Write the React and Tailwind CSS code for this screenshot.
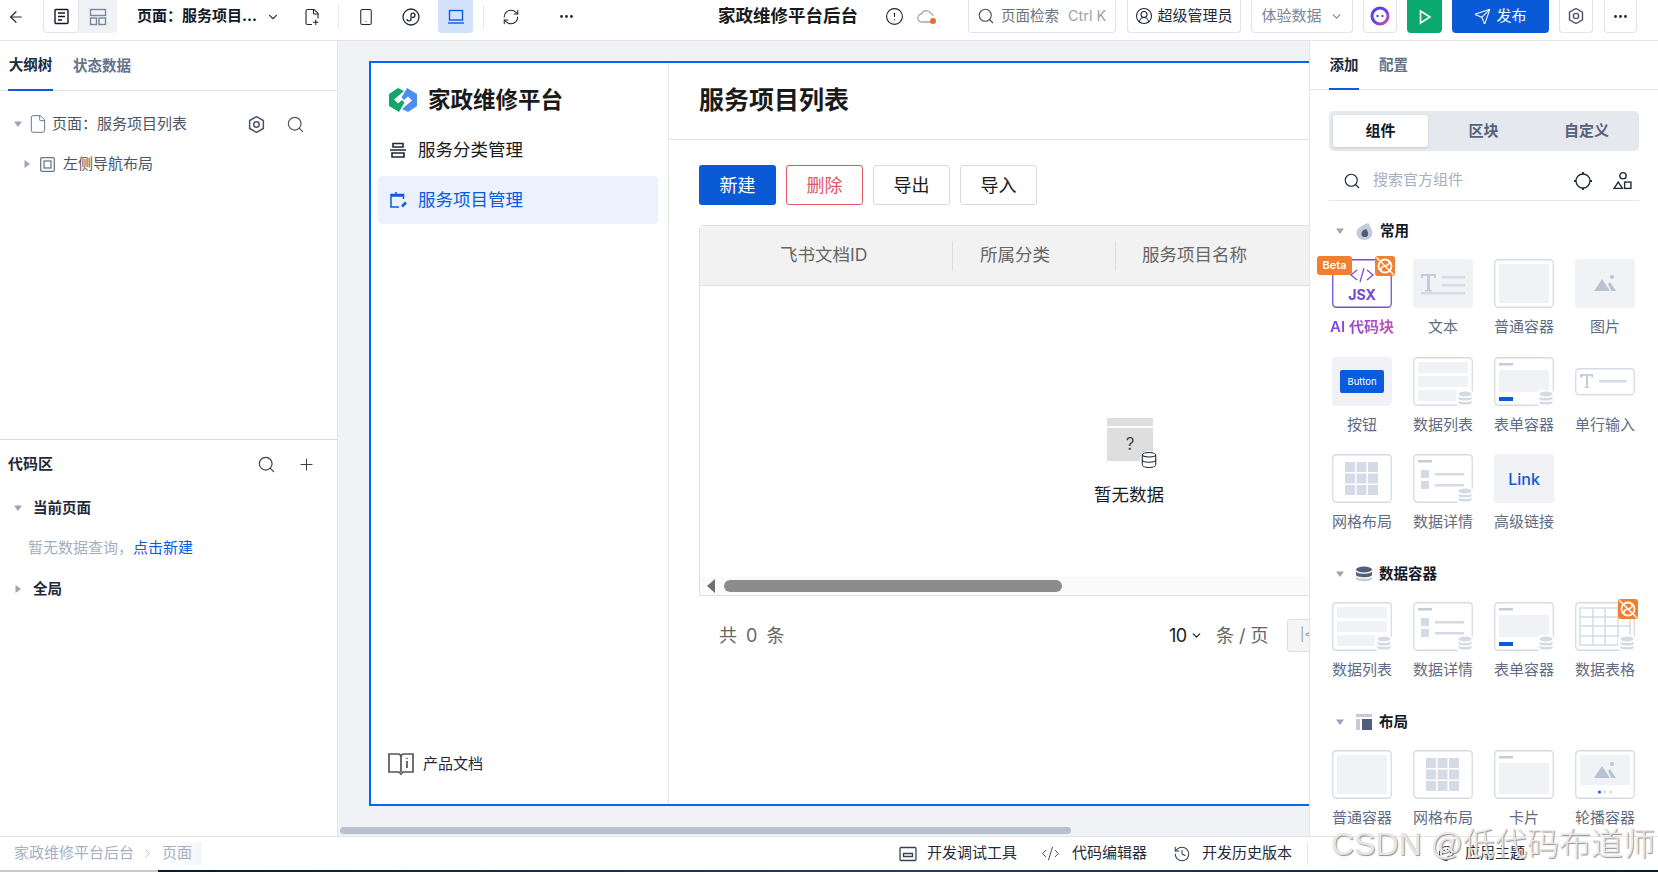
import React from "react";
import {
  ArrowLeft,
  ChevronDown,
  ChevronRight,
  FilePlus2,
  Smartphone,
  RefreshCw,
  Ellipsis,
  CircleAlert,
  Search,
  CircleUserRound,
  Send,
  File,
  Plus,
  History,
  CodeXml,
  Database,
  Palette,
} from "lucide-react";

const Tri = ({ open = true, className = "" }) => (
  <svg viewBox="0 0 10 10" className={`w-[10px] h-[10px] shrink-0 ${className}`}>
    {open ? <path d="M1 2.5h8L5 8z" fill="#9aa5b8" /> : <path d="M2.5 1v8L8 5z" fill="#9aa5b8" />}
  </svg>
);

const HexIcon = ({ size = 18, color = "#4b5563" }) => (
  <svg width={size} height={size} viewBox="0 0 18 18" fill="none" stroke={color} strokeWidth="1.4">
    <path d="M9 1.5l6.5 3.7v7.6L9 16.5l-6.5-3.7V5.2z" />
    <circle cx="9" cy="9" r="2.6" />
  </svg>
);

const OrangeBadge = ({ className = "" }) => (
  <svg viewBox="0 0 20 20" className={`w-[20px] h-[20px] ${className}`}>
    <rect width="20" height="20" rx="3" fill="#f07f2e" />
    <g fill="none" stroke="#fff" strokeWidth="1.8">
      <circle cx="10" cy="10" r="6.5" />
      <path d="M1.5 1.500l17 17" strokeWidth="1.500" />
      <path d="M6.500 14.500c-2-3 1.500-4 3.500-4.500s5.500-1.500 3.500-4.500" strokeWidth="1.500" />
    </g>
  </svg>
);

const DbMark = () => (
  <g>
    <rect x="43" y="33" width="17" height="16" rx="4" fill="#fff" />
    <ellipse cx="52" cy="37" rx="6.5" ry="2.4" fill="#d4dae4" />
    <path d="M45.5 39.5c1 2 12 2 13 0V42c-1 2-12 2-13 0zM45.5 43.5c1 2 12 2 13 0V46c-1 2-12 2-13 0z" fill="#d4dae4" />
  </g>
);

const Frame = ({ children }) => (
  <>
    <rect x=".75" y=".75" width="58.5" height="47.5" rx="3.5" fill="#fff" stroke="#d5dbe6" strokeWidth="1.3" />
    {children}
  </>
);

const Mountain = ({ x = 0, y = 0 }) => (
  <g transform={`translate(${x} ${y})`} fill="#b9c3d0">
    <path d="M0 13L8 1l8 12zM14 6l2-2 6 9h-4.500z" />
    <circle cx="18" cy="-1" r="2" />
  </g>
);

const GridCells = () => (
  <g fill="#d5dbe6">
    {[8, 19.5, 31].map((y) =>
      [13, 24.5, 36].map((x) => <rect key={`${x}-${y}`} x={x} y={y} width="10" height="10" />)
    )}
  </g>
);

const thumbs = {
  jsx: (
    <>
      <rect x=".75" y=".75" width="58.5" height="47.5" rx="3.5" fill="#fff" stroke="#7a4fd6" strokeWidth="1.3" />
      <path d="M25 11l-6 5 6 5M35 11l6 5-6 5M32 9l-4 14" fill="none" stroke="#7a4fd6" strokeWidth="1.3" />
      <text x="30" y="41" textAnchor="middle" fontSize="14" fontWeight="700" fill="#7349cf" fontFamily="Inter, sans-serif">JSX</text>
    </>
  ),
  text: (
    <>
      <rect width="60" height="49" rx="4" fill="#f0f2f6" />
      <path d="M8 15h15v4h-1.5l-1-2H17v14h2v1.500h-7V31h2V17h-3.500l-1 2H8z" fill="#c5ccd8" />
      <path d="M29 17h23v2.500H29zM29 25h23v2.500H29zM8 33h44v2.500H8z" fill="#d5dbe6" />
    </>
  ),
  box: (
    <Frame>
      <rect x="5" y="5" width="50" height="39" rx="1" fill="#f0f2f6" />
    </Frame>
  ),
  image: (
    <>
      <rect width="60" height="49" rx="4" fill="#f0f2f6" />
      <Mountain x={19} y={19} />
    </>
  ),
  button: (
    <>
      <rect width="60" height="49" rx="4" fill="#f0f2f6" />
      <rect x="8" y="13" width="44" height="23" rx="2" fill="#0a5be0" />
      <text x="30" y="28" textAnchor="middle" fontSize="9.500" fill="#fff" fontFamily="Inter, sans-serif">Button</text>
    </>
  ),
  list: (
    <Frame>
      <path d="M5 5h50v11H5zM5 19h50v11H5zM5 33h50v11H5z" fill="#f0f2f6" />
      <DbMark />
    </Frame>
  ),
  form: (
    <Frame>
      <rect x="5" y="6" width="14" height="2.500" fill="#c5ccd8" />
      <rect x="5" y="13" width="50" height="22" rx="1" fill="#f0f2f6" />
      <rect x="5" y="40" width="14" height="4" fill="#0a5be0" />
      <DbMark />
    </Frame>
  ),
  input: (
    <>
      <rect x=".75" y="11.750" width="58.500" height="26" rx="3.500" fill="#fff" stroke="#d5dbe6" strokeWidth="1.300" />
      <path d="M5 17h13v3.500h-1.200l-.8-1.700h-3v11.400h1.700V31H9.300v-1.300H11V18.800H8l-.8 1.700H5z" fill="#c5ccd8" />
      <rect x="24" y="23" width="28" height="2.500" fill="#d5dbe6" />
    </>
  ),
  grid: (
    <Frame>
      <GridCells />
    </Frame>
  ),
  detail: (
    <Frame>
      <rect x="5" y="6" width="14" height="2.500" fill="#c5ccd8" />
      <path d="M8 16h8v8H8zM8 27h8v8H8z" fill="#d5dbe6" />
      <path d="M22 19h29v2.500H22zM22 30h29v2.500H22z" fill="#d5dbe6" />
      <DbMark />
    </Frame>
  ),
  link: (
    <>
      <rect width="60" height="49" rx="4" fill="#f0f2f6" />
      <text x="30" y="31" textAnchor="middle" fontSize="16" fontWeight="500" fill="#0a5be0" fontFamily="Inter, sans-serif">Link</text>
    </>
  ),
  table: (
    <Frame>
      <g fill="none" stroke="#d5dbe6" strokeWidth="1.500">
        <rect x="5" y="6" width="50" height="37" />
        <path d="M18 6v37M30 6v37M43 6v37M5 15h50M5 24h50M5 34h50" />
      </g>
      <DbMark />
    </Frame>
  ),
  card: (
    <Frame>
      <rect x="5" y="6" width="14" height="2.500" fill="#c5ccd8" />
      <rect x="5" y="13" width="50" height="31" rx="1" fill="#f0f2f6" />
    </Frame>
  ),
  carousel: (
    <Frame>
      <rect x="5" y="5" width="50" height="30" rx="1" fill="#f0f2f6" />
      <Mountain x={19} y={15} />
      <circle cx="24.500" cy="42" r="1.500" fill="#0a5be0" />
      <circle cx="30" cy="42" r="1.500" fill="#d5dbe6" />
      <circle cx="35.500" cy="42" r="1.500" fill="#d5dbe6" />
    </Frame>
  ),
};

const sections = [
  {
    name: "常用",
    top: "mt-[20px]",
    icon: (
      <svg viewBox="0 0 16 16" className="w-[17px] h-[17px]">
        <path d="M11.500 0C14 4 15.500 6.500 15.500 9.500A7.500 6.500 0 0 1 .5 9.500C.5 5.500 5 2 11.500 0z" fill="#c5ccd8" />
        <path d="M9.500 5.500c1 2 2 3 2 4.500a3.200 3.200 0 0 1-6.400 0c0-1.700 2-3.500 4.400-4.500z" fill="#4f5f7b" />
      </svg>
    ),
    items: [
      { label: "AI 代码块", kind: "jsx", ai: true },
      { label: "文本", kind: "text" },
      { label: "普通容器", kind: "box" },
      { label: "图片", kind: "image" },
      { label: "按钮", kind: "button" },
      { label: "数据列表", kind: "list" },
      { label: "表单容器", kind: "form" },
      { label: "单行输入", kind: "input" },
      { label: "网格布局", kind: "grid" },
      { label: "数据详情", kind: "detail" },
      { label: "高级链接", kind: "link" },
    ],
  },
  {
    name: "数据容器",
    top: "mt-[31px]",
    icon: (
      <svg viewBox="0 0 16 16" className="w-[16px] h-[16px]">
        <ellipse cx="8" cy="3.500" rx="8" ry="3" fill="#4f5f7b" />
        <path d="M0 5.500c1 3 15 3 16 0V9c-1 3-15 3-16 0z" fill="#4f5f7b" />
        <path d="M0 10.500c1 3 15 3 16 0V13c-1 3-15 3-16 0z" fill="#c5ccd8" />
      </svg>
    ),
    items: [
      { label: "数据列表", kind: "list" },
      { label: "数据详情", kind: "detail" },
      { label: "表单容器", kind: "form" },
      { label: "数据表格", kind: "table", hot: true },
    ],
  },
  {
    name: "布局",
    top: "mt-[31px]",
    icon: (
      <svg viewBox="0 0 16 16" className="w-[16px] h-[16px]">
        <path d="M0 0h16v3H0zM0 5h4v11H0z" fill="#c5ccd8" />
        <path d="M6 5h10v11H6z" fill="#4f5f7b" />
      </svg>
    ),
    items: [
      { label: "普通容器", kind: "box" },
      { label: "网格布局", kind: "grid" },
      { label: "卡片", kind: "card" },
      { label: "轮播容器", kind: "carousel" },
    ],
  },
];

const ComponentCell = ({ item }) => (
  <div className="w-[60px]">
    <div className="relative h-[49px]">
      <svg viewBox="0 0 60 49" className="w-[60px] h-[49px]">
        {thumbs[item.kind]}
      </svg>
      {item.ai && (
        <>
          <span className="absolute left-[-15px] top-[-3px] w-[35px] h-[19px] rounded-[3px] bg-[#f07f2e] text-white text-[11px] font-semibold flex items-center justify-center">
            Beta
          </span>
          <OrangeBadge className="absolute left-[43px] top-[-3px]" />
        </>
      )}
      {item.hot && <OrangeBadge className="absolute left-[43px] top-[-3px]" />}
    </div>
    <div
      className={`mt-[8px] h-[22px] leading-[22px] text-center whitespace-nowrap -mx-[5px] ${
        item.ai
          ? "text-[15px] font-semibold bg-gradient-to-r from-[#7b3fe4] to-[#c653b0] bg-clip-text text-transparent"
          : "text-[15px] text-[#5f6c84]"
      }`}
    >
      {item.label}
    </div>
  </div>
);

const Box = ({ className = "", children }) => (
  <div
    className={`h-[33px] shrink-0 flex items-center justify-center rounded-b-[4px] border border-t-0 border-[#dfe3ea] ${className}`}
  >
    {children}
  </div>
);

const TopBar = () => (
  <header className="h-[41px] shrink-0 flex items-start border-b border-[#e2e5ea] bg-white">
    <div className="ml-[7px] h-[33px] flex items-center text-[#1f2937]">
      <ArrowLeft size={18} strokeWidth={1.6} />
    </div>
    <div className="ml-[18px] flex h-[33px]">
      <div className="w-[36px] flex items-center justify-center rounded-b-[4px] border border-t-0 border-[#dfe3ea] bg-white">
        <svg width="17" height="17" viewBox="0 0 17 17" fill="none" stroke="#111827" strokeWidth="1.400">
          <rect x="2" y="1.500" width="13" height="14" rx="1" />
          <path d="M5 5h7M5 8.500h7M5 12h4" />
        </svg>
      </div>
      <div className="w-[38px] flex items-center justify-center rounded-br-[4px] bg-[#f0f2f6]">
        <svg width="18" height="18" viewBox="0 0 18 18" fill="none" stroke="#7b8799" strokeWidth="1.400">
          <rect x="1.500" y="1.500" width="15" height="6" />
          <rect x="1.500" y="10" width="6" height="6.500" />
          <rect x="10" y="10" width="6.500" height="6.500" />
        </svg>
      </div>
    </div>
    <div className="ml-[20px] h-[33px] w-[116px] flex items-center text-[15px] font-bold text-[#111827] whitespace-nowrap">
      页面：服务项目...
    </div>
    <div className="ml-[13px] h-[33px] flex items-center text-[#374151]">
      <ChevronDown size={14} />
    </div>
    <div className="ml-[23px] h-[33px] flex items-center text-[#1f2937]">
      <FilePlus2 size={18} strokeWidth={1.500} />
    </div>
    <div className="ml-[17px] mt-[5px] w-px h-[24px] bg-[#e5e7eb]" />
    <div className="ml-[18px] h-[33px] flex items-center text-[#1f2937]">
      <Smartphone size={18} strokeWidth={1.400} />
    </div>
    <div className="ml-[27px] h-[33px] flex items-center">
      <svg width="18" height="18" viewBox="0 0 18 18" fill="none" stroke="#1f2937" strokeWidth="1.300">
        <circle cx="9" cy="9" r="8" />
        <path d="M5 11c0 2.500 4 2.500 4 0V7c0-2.500 4-2.500 4 0s-2 2.500-3 2.500" />
      </svg>
    </div>
    <div className="ml-[18px] w-[35px] h-[33px] flex items-center justify-center rounded-b-[4px] bg-[#d3e2fb]">
      <svg width="18" height="16" viewBox="0 0 18 16" fill="none" stroke="#0a5be0" strokeWidth="1.400">
        <rect x="2.500" y="1.500" width="13" height="9.500" />
        <path d="M1 14h16" />
      </svg>
    </div>
    <div className="ml-[10px] mt-[5px] w-px h-[24px] bg-[#e5e7eb]" />
    <div className="ml-[18px] h-[33px] flex items-center text-[#1f2937]">
      <RefreshCw size={18} strokeWidth={1.400} />
    </div>
    <div className="ml-[38px] h-[33px] flex items-center text-[#1f2937]">
      <Ellipsis size={17} />
    </div>
    <div className="ml-[143px] h-[33px] w-[139px] flex items-center text-[17.500px] font-bold text-[#1a1a1a] whitespace-nowrap">
      家政维修平台后台
    </div>
    <div className="ml-[28px] h-[33px] flex items-center text-[#1f2937]">
      <CircleAlert size={19} strokeWidth={1.400} />
    </div>
    <div className="ml-[13px] h-[33px] flex items-center">
      <svg width="21" height="16" viewBox="0 0 21 16" fill="none">
        <path d="M14 13H5a4 4 0 0 1-.500-8A5 5 0 0 1 13.500 4a4 4 0 0 1 2.500 3" stroke="#9ca6b5" strokeWidth="1.300" />
        <circle cx="16" cy="12" r="3" fill="#ee6c2b" />
      </svg>
    </div>
    <Box className="ml-[30px] w-[148px] text-[14.500px] !justify-start pl-[8px] gap-[6px]">
      <Search size={18} strokeWidth={1.500} className="text-[#4b5563]" />
      <span className="text-[#6b7280] whitespace-nowrap">页面检索</span>
      <span className="text-[#9ca3af] ml-[3px] whitespace-nowrap">Ctrl K</span>
    </Box>
    <Box className="ml-[11px] w-[114px] gap-[4px] text-[15px] text-[#1f2937]">
      <CircleUserRound size={18} strokeWidth={1.400} />
      <span className="whitespace-nowrap">超级管理员</span>
    </Box>
    <Box className="ml-[10px] w-[102px] gap-[8px] text-[15px] text-[#7b8799]">
      <span className="whitespace-nowrap">体验数据</span>
      <ChevronDown size={13} />
    </Box>
    <Box className="ml-[10px] w-[34px]">
      <svg width="20" height="20" viewBox="0 0 20 20">
        <defs>
          <linearGradient id="ai" x1="0" y1="0" x2="1" y2="1">
            <stop offset="0" stopColor="#3b49e8" />
            <stop offset="0.600" stopColor="#7b3fe4" />
            <stop offset="1" stopColor="#e0529c" />
          </linearGradient>
        </defs>
        <circle cx="10" cy="10" r="8" fill="none" stroke="url(#ai)" strokeWidth="3" />
        <circle cx="7.500" cy="10" r="1.200" fill="#3b49e8" />
        <circle cx="12.500" cy="10" r="1.200" fill="#7b3fe4" />
      </svg>
    </Box>
    <div className="ml-[10px] w-[35px] h-[33px] flex items-center justify-center rounded-b-[4px] bg-[#0ba870]">
      <svg width="14" height="16" viewBox="0 0 14 16" fill="none" stroke="#fff" strokeWidth="1.600">
        <path d="M2.500 2v12L12 8z" />
      </svg>
    </div>
    <div className="ml-[10px] w-[97px] h-[33px] flex items-center justify-center gap-[5px] rounded-b-[4px] bg-[#0a5ad8] text-white text-[15px]">
      <Send size={17} strokeWidth={1.500} />
      <span>发布</span>
    </div>
    <Box className="ml-[10px] w-[34px]">
      <HexIcon size={18} />
    </Box>
    <Box className="ml-[11px] w-[33px] text-[#1f2937]">
      <Ellipsis size={17} />
    </Box>
  </header>
);

const LeftPanel = () => (
  <aside className="w-[338px] shrink-0 flex flex-col border-r border-[#e2e5ea] bg-white">
    <div className="h-[50px] shrink-0 flex gap-[20px] px-[8px] border-b border-[#e2e5ea]">
      <div className="h-[50px] w-[45px] flex items-center justify-center text-[14.500px] font-bold text-[#1f2937] border-b-2 border-[#0a5be0] whitespace-nowrap">
        大纲树
      </div>
      <div className="h-[49px] flex items-center text-[14.500px] font-semibold text-[#64728a] whitespace-nowrap">
        状态数据
      </div>
    </div>
    <div className="h-[349px] shrink-0 pt-[13px] border-b border-[#d5dbe6]">
      <div className="h-[40px] flex items-center pl-[13px] text-[15px] text-[#4b5563]">
        <Tri />
        <File size={20} strokeWidth={1.200} className="ml-[5px] text-[#6b7892]" />
        <span className="ml-[4px] whitespace-nowrap">页面：服务项目列表</span>
        <span className="ml-[60px]">
          <HexIcon size={19} />
        </span>
        <Search size={19} strokeWidth={1.500} className="ml-[20px] text-[#4b5563]" />
      </div>
      <div className="h-[40px] flex items-center pl-[22px] text-[15px] text-[#4b5563]">
        <Tri open={false} />
        <svg width="15" height="15" viewBox="0 0 15 15" fill="none" stroke="#6b7892" strokeWidth="1.300" className="ml-[8px]">
          <rect x=".700" y=".700" width="13.600" height="13.600" rx="1" />
          <rect x="4" y="4" width="7" height="7" />
        </svg>
        <span className="ml-[8px] whitespace-nowrap">左侧导航布局</span>
      </div>
    </div>
    <div className="h-[48px] shrink-0 flex items-center pl-[8px] text-[15px] font-bold text-[#1f2937]">
      <span>代码区</span>
      <Search size={19} strokeWidth={1.500} className="ml-[204px] text-[#374151]" />
      <Plus size={19} strokeWidth={1.300} className="ml-[21px] text-[#374151]" />
    </div>
    <div className="h-[40px] flex items-center pl-[13px] text-[14.500px] font-semibold text-[#1f2937]">
      <Tri />
      <span className="ml-[10px]">当前页面</span>
    </div>
    <div className="h-[40px] flex items-center pl-[28px] text-[15px] text-[#a5afc0] whitespace-nowrap">
      暂无数据查询，<span className="text-[#0a5be0]">点击新建</span>
    </div>
    <div className="h-[41px] flex items-center pl-[13px] text-[14.500px] font-semibold text-[#1f2937]">
      <Tri open={false} />
      <span className="ml-[10px]">全局</span>
    </div>
  </aside>
);

const NavMenu = () => (
  <div className="w-[298px] shrink-0 flex flex-col border-r border-[#e5e5e5]">
    <div className="flex items-center h-[50px] mt-[12px] pl-[18px]">
      <svg width="28" height="24" viewBox="0 0 28 24">
        <path d="M9 0l6 3-10 8.500 4 4 4-3.500 2.500 2.500L10 24 0 18V6z" fill="#12a66a" />
        <path d="M19 24l-6-3 10-8.500-4-4-4 3.500-2.500-2.500L18 0l10 6v12z" fill="#4d8df2" />
      </svg>
      <span className="ml-[11px] text-[22.500px] font-bold text-[#1a1a1a] whitespace-nowrap">家政维修平台</span>
    </div>
    <div className="flex items-center h-[48px] mt-[1px] pl-[19px] text-[17.500px] text-[#1a1a1a]">
      <svg width="16" height="16" viewBox="0 0 16 16" fill="none" stroke="#1f2937" strokeWidth="1.600">
        <path d="M3 1.500h10v3.500H3zM0 8h16M2 11h12v4H2z" />
      </svg>
      <span className="ml-[12px] whitespace-nowrap">服务分类管理</span>
    </div>
    <div className="flex items-center w-[280px] h-[48px] mt-[2px] mx-[7px] rounded-[4px] bg-[#ebf1fd] pl-[12px] text-[17.500px] text-[#0a5be0]">
      <svg width="18" height="18" viewBox="0 0 18 18" fill="none" stroke="#0a5be0" strokeWidth="1.500">
        <path d="M6 1v3M1 5h12.500M9 16H1V3.500h12.500V8" />
        <path d="M12 15.500l4-4" strokeWidth="2.500" />
      </svg>
      <span className="ml-[10px] whitespace-nowrap">服务项目管理</span>
    </div>
    <div className="mt-auto mb-[28px] flex items-center pl-[17px]">
      <svg width="26" height="24" viewBox="0 0 26 24" fill="none" stroke="#555" strokeWidth="1.700">
        <path d="M1 2h9c2 0 3 1 3 3 0-2 1-3 3-3h9v18H15l-2 2-2-2H1zM13 5v15" />
        <path d="M19 6v1M19 9v7" />
      </svg>
      <span className="ml-[9px] text-[15px] text-[#1f2937]">产品文档</span>
    </div>
  </div>
);

const PageContent = () => (
  <div className="flex-1 flex flex-col">
    <div className="h-[77px] shrink-0 flex items-center pl-[30px] border-b border-[#e5e5e5] text-[25px] font-bold text-[#1a1a1a]">
      服务项目列表
    </div>
    <div className="flex gap-[10px] pl-[30px] mt-[25px] text-[18px]">
      <button className="w-[77px] h-[40px] rounded-[3px] bg-[#0a5ad8] text-white">新建</button>
      <button className="w-[77px] h-[40px] rounded-[3px] border border-[#e15766] text-[#e15766]">删除</button>
      <button className="w-[77px] h-[40px] rounded-[3px] border border-[#d9d9d9] text-[#1a1a1a]">导出</button>
      <button className="w-[77px] h-[40px] rounded-[3px] border border-[#d9d9d9] text-[#1a1a1a]">导入</button>
    </div>
    <div className="ml-[30px] mt-[20px] w-[800px]">
      <div className="border border-[#e0e0e0] rounded-t-[4px]">
        <div className="h-[60px] flex items-center bg-[#f2f2f2] border-b border-[#e0e0e0] text-[17.500px] text-[#666]">
          <div className="w-[252px] pl-[80px] whitespace-nowrap">飞书文档ID</div>
          <div className="w-px h-[30px] bg-[#dcdcdc]" />
          <div className="w-[162px] pl-[27px] whitespace-nowrap">所属分类</div>
          <div className="w-px h-[30px] bg-[#dcdcdc]" />
          <div className="pl-[26px] whitespace-nowrap">服务项目名称</div>
        </div>
        <div className="h-[291px] pt-[132px] pl-[407px]">
          <div className="relative w-[46px] h-[43px] flex flex-col">
            <div className="h-[8px] bg-[#dedede]" />
            <div className="mt-[2px] flex-1 bg-[#dedede] flex items-center justify-center text-[17px] text-[#444]">?</div>
            <Database size={18} strokeWidth={1.400} className="absolute left-[33px] top-[33px] text-[#1f2937] bg-white rounded-full" />
          </div>
          <div className="mt-[22px] -ml-[13px] text-[17.500px] leading-[24px] text-[#1a1a1a] whitespace-nowrap">暂无数据</div>
        </div>
        <div className="h-[18px] flex items-center bg-[#fafafa] pl-[6px]">
          <svg width="9" height="14" viewBox="0 0 9 14">
            <path d="M9 0v14L1 7z" fill="#707070" />
          </svg>
          <div className="ml-[9px] w-[338px] h-[12px] rounded-full bg-[#8c8c8c]" />
        </div>
      </div>
      <div className="h-[78px] flex items-center pl-[20px] text-[18px] text-[#666] whitespace-nowrap shadow-[0_1px_2px_rgba(0,0,0,0.015)]">
        <span className="w-[66px] tracking-[2px]">共 0 条</span>
        <span className="ml-[384px] w-[20px] text-[#1a1a1a] tracking-[-0.500px]">10</span>
        <ChevronDown size={13} className="ml-[1px] text-[#1a1a1a]" strokeWidth={2.200} />
        <span className="ml-[13px] w-[52px]">条 / 页</span>
        <div className="ml-[19px] w-[60px] h-[33px] rounded-[3px] border border-[#ddd] bg-[#f5f5f5] flex items-center pl-[12px] text-[13px] text-[#999]">
          |&lt;
        </div>
      </div>
    </div>
  </div>
);

const RightPanel = () => (
  <aside className="w-[349px] shrink-0 border-l border-[#e2e5ea] bg-white overflow-hidden">
    <div className="h-[49px] flex gap-[20px] pl-[19px] border-b border-[#e2e5ea]">
      <div className="h-[49px] w-[30px] flex items-center justify-center text-[14.500px] font-bold text-[#1f2937] border-b-2 border-[#0a5be0]">
        添加
      </div>
      <div className="h-[48px] flex items-center text-[14.500px] font-semibold text-[#64728a]">配置</div>
    </div>
    <div className="mx-[19px] mt-[21px] h-[40px] rounded-[5px] bg-[#e5e8ed] flex items-center px-[4px] text-[15px] font-semibold text-[#54627a]">
      <div className="w-[95px] h-[32px] rounded-[3px] bg-white shadow-sm flex items-center justify-center text-[#111827] font-bold">组件</div>
      <div className="w-[111px] text-center">区块</div>
      <div className="w-[95px] text-center">自定义</div>
    </div>
    <div className="mx-[19px] h-[50px] pt-[10px] flex items-center border-b border-[#e2e5ea] pl-[14px] text-[15px] text-[#a5afc0]">
      <Search size={18} strokeWidth={1.500} className="text-[#1f2937]" />
      <span className="ml-[12px]">搜索官方组件</span>
      <svg width="20" height="20" viewBox="0 0 20 20" fill="none" stroke="#1f2937" strokeWidth="1.300" className="ml-[110px]">
        <circle cx="10" cy="10" r="7" />
        <path d="M10 1v2M10 17v2M1 10h2M17 10h2" strokeWidth="1.800" />
      </svg>
      <svg width="19" height="19" viewBox="0 0 18 18" fill="none" stroke="#1f2937" strokeWidth="1.300" className="ml-[20px]">
        <circle cx="9.500" cy="4.500" r="3" />
        <path d="M5 10.500l4 6H1z" />
        <rect x="11" y="10.500" width="6" height="6" />
      </svg>
    </div>
    {sections.map((section) => (
      <section key={section.name}>
        <div className={`${section.top} h-[20px] flex items-center pl-[25px] text-[14.500px] font-bold text-[#111827]`}>
          <Tri />
          <span className="ml-[11px]">{section.icon}</span>
          <span className="ml-[7px] whitespace-nowrap">{section.name}</span>
        </div>
        <div className="mt-[18px] pl-[22px] grid grid-cols-[repeat(4,60px)] gap-x-[21px] gap-y-[18.500px]">
          {section.items.map((item) => (
            <ComponentCell key={item.label} item={item} />
          ))}
        </div>
      </section>
    ))}
  </aside>
);

const Footer = () => (
  <footer className="h-[36px] shrink-0 flex flex-col border-t border-[#e2e5ea] bg-white">
    <div className="flex-1 flex items-center text-[15px] text-[#1f2937] whitespace-nowrap">
      <span className="ml-[14px] w-[120px] text-[#a5afc0]">家政维修平台后台</span>
      <ChevronRight size={15} strokeWidth={1.200} className="ml-[6px] text-[#a5afc0]" />
      <span className="ml-[7px] w-[40px] text-[#a5afc0] bg-gradient-to-r from-white to-[#f4f6f9]">页面</span>
      <svg width="18" height="16" viewBox="0 0 18 16" fill="none" stroke="#374151" strokeWidth="1.300" className="ml-[697px]">
        <rect x="1" y="1.500" width="16" height="13" rx="1" />
        <path d="M4.500 7.500h9v3h-9z" />
      </svg>
      <span className="ml-[10px] w-[92px]">开发调试工具</span>
      <CodeXml size={19} strokeWidth={1.200} className="ml-[22px] text-[#374151]" />
      <span className="ml-[12px] w-[77px]">代码编辑器</span>
      <History size={18} strokeWidth={1.400} className="ml-[24px] text-[#374151]" />
      <span className="ml-[11px] w-[92px]">开发历史版本</span>
      <div className="ml-[13px] w-px h-[22px] bg-[#dfe3ea]" />
      <Palette size={17} strokeWidth={1.400} className="ml-[130px] text-[#1f2937]" />
      <span className="ml-[10px]">应用主题</span>
    </div>
    <div className="h-[2px] flex">
      <div className="w-[158px] bg-[#c9c9c9]" />
      <div className="flex-1 bg-gradient-to-r from-[#0c1c2a] via-[#2c3e50] to-[#0c1c2a]" />
    </div>
  </footer>
);

export default function App() {
  return (
    <div className="relative w-[1658px] h-[872px] flex flex-col overflow-hidden bg-white font-['Inter','Noto_Sans_CJK_SC',sans-serif]">
      <TopBar />
      <div className="flex-1 flex min-h-0">
        <LeftPanel />
        <main className="flex-1 min-w-0 flex flex-col bg-[#f0f2f6] overflow-hidden">
          <div className="ml-[31px] mt-[20px] w-[1100px] h-[745px] shrink-0 flex bg-white border-2 border-[#0066ff]">
            <NavMenu />
            <PageContent />
          </div>
          <div className="ml-[2px] mt-[21px] w-[731px] h-[7px] shrink-0 rounded-full bg-[#b9c1cf]" />
        </main>
        <RightPanel />
      </div>
      <Footer />
      <div className="absolute right-[3px] bottom-[6px] text-[32px] leading-[44px] font-light text-[#e6e6e6] font-['Liberation_Sans','Noto_Sans_CJK_SC',sans-serif] [text-shadow:1px_1px_1px_#8f8f8f] whitespace-nowrap pointer-events-none">
        CSDN @低代码布道师
      </div>
    </div>
  );
}
